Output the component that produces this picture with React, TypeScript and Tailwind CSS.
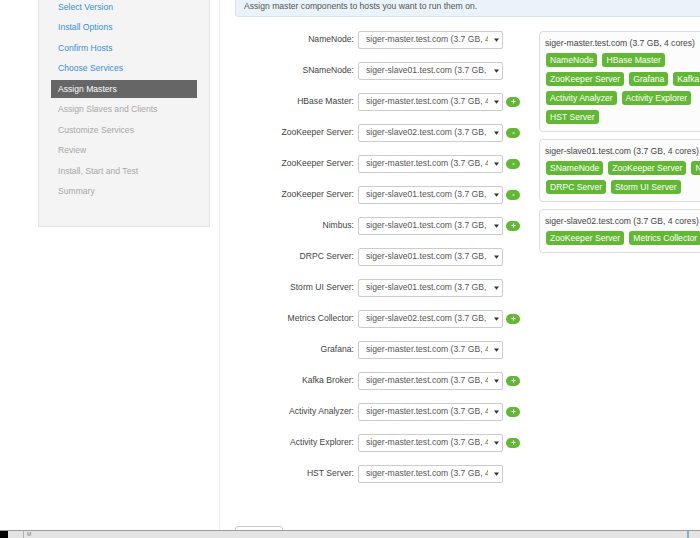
import React from 'react';

type Row = { label: string; host: string; action?: 'add' | 'remove' };

const MASTER = 'siger-master.test.com (3.7 GB, 4 cores)';
const SLAVE1 = 'siger-slave01.test.com (3.7 GB, 4 cores)';
const SLAVE2 = 'siger-slave02.test.com (3.7 GB, 4 cores)';

const steps = [
  { name: 'Select Version', state: 'done' },
  { name: 'Install Options', state: 'done' },
  { name: 'Confirm Hosts', state: 'done' },
  { name: 'Choose Services', state: 'done' },
  { name: 'Assign Masters', state: 'active' },
  { name: 'Assign Slaves and Clients', state: 'todo' },
  { name: 'Customize Services', state: 'todo' },
  { name: 'Review', state: 'todo' },
  { name: 'Install, Start and Test', state: 'todo' },
  { name: 'Summary', state: 'todo' },
];

const rows: Row[] = [
  { label: 'NameNode', host: MASTER },
  { label: 'SNameNode', host: SLAVE1 },
  { label: 'HBase Master', host: MASTER, action: 'add' },
  { label: 'ZooKeeper Server', host: SLAVE2, action: 'remove' },
  { label: 'ZooKeeper Server', host: MASTER, action: 'remove' },
  { label: 'ZooKeeper Server', host: SLAVE1, action: 'remove' },
  { label: 'Nimbus', host: SLAVE1, action: 'add' },
  { label: 'DRPC Server', host: SLAVE1 },
  { label: 'Storm UI Server', host: SLAVE1 },
  { label: 'Metrics Collector', host: SLAVE2, action: 'add' },
  { label: 'Grafana', host: MASTER },
  { label: 'Kafka Broker', host: MASTER, action: 'add' },
  { label: 'Activity Analyzer', host: MASTER, action: 'add' },
  { label: 'Activity Explorer', host: MASTER, action: 'add' },
  { label: 'HST Server', host: MASTER },
];

const hosts = [
  {
    name: MASTER,
    lines: [
      ['NameNode', 'HBase Master'],
      ['ZooKeeper Server', 'Grafana', 'Kafka Broker'],
      ['Activity Analyzer', 'Activity Explorer'],
      ['HST Server'],
    ],
  },
  {
    name: SLAVE1,
    lines: [
      ['SNameNode', 'ZooKeeper Server', 'Nimbus'],
      ['DRPC Server', 'Storm UI Server'],
    ],
  },
  {
    name: SLAVE2,
    lines: [['ZooKeeper Server', 'Metrics Collector']],
  },
];

const ActionButton = ({ kind }: { kind: 'add' | 'remove' }) => (
  <button className="w-[14px] h-[10px] rounded-full bg-[#62b734] flex items-center justify-center">
    <svg width="5" height="5" viewBox="0 0 5 5">
      {kind === 'add' ? (
        <path d="M2.5 0.5v4M0.5 2.5h4" stroke="#fff" strokeWidth="1.1" />
      ) : (
        <path d="M1.5 3h2" stroke="#fff" strokeWidth="1" />
      )}
    </svg>
  </button>
);

export default function App() {
  return (
    <div className="w-[700px] h-[538px] overflow-hidden bg-white flex flex-col text-[8.6px] font-['Liberation_Sans',Arial,sans-serif]">
      <div className="h-[530px] flex overflow-hidden">
        {/* wizard steps */}
        <div className="w-[220px] shrink-0 border-r border-[#ececec]">
          <div className="ml-[38px] w-[172px] -mt-[4px] bg-[#f4f4f4] border border-[#e2e2e2] border-t-0 pt-[1px] pb-[24px] px-[12px]">
            {steps.map((s) => (
              <div key={s.name} className="h-[20.5px] flex items-center">
                <div
                  className={`w-full h-[18px] flex items-center px-[7px] ${
                    s.state === 'active'
                      ? 'bg-[#666666] text-white'
                      : s.state === 'done'
                      ? 'text-[#3a8fd6]'
                      : 'text-[#a8a8a8]'
                  }`}
                >
                  {s.name}
                </div>
              </div>
            ))}
          </div>
        </div>

        {/* main */}
        <div className="flex-1 pl-[15px] min-w-0">
          <div className="-mt-[10px] h-[27px] w-[520px] bg-[#eaf3f9] border border-[#d5e6f1] rounded-[3px] flex items-end pb-[3px] pl-[8px] text-[#555]">
            Assign master components to hosts you want to run them on.
          </div>

          <div className="flex mt-[7px]">
            <div className="w-[304px] shrink-0">
              {rows.map((r, i) => (
                <div key={i} className="h-[31px] flex items-center">
                  <div className="w-[119px] text-right text-[#444] mr-[4px] whitespace-nowrap">{r.label}:</div>
                  <div className="w-[145px] h-[18px] border border-[#cccccc] rounded-[2px] bg-white flex items-center pl-[7px] pr-[3px] text-[#555]">
                    <span className="flex-1 overflow-hidden whitespace-nowrap">{r.host}</span>
                    <svg width="5" height="4" viewBox="0 0 5 4" className="ml-[6px] shrink-0">
                      <path d="M0 0.5h5L2.5 3.8z" fill="#333" />
                    </svg>
                  </div>
                  <div className="ml-[3px] w-[14px]">{r.action && <ActionButton kind={r.action} />}</div>
                </div>
              ))}
              <div className="mt-[37px] w-[48px] h-[20px] border border-[#cccccc] rounded-[3px]" />
            </div>

            <div className="mt-[7px] flex flex-col gap-[7px]">
              {hosts.map((h) => (
                <div
                  key={h.name}
                  className="w-[200px] border border-[#dddddd] rounded-[4px] bg-[#fcfcfc] pt-[5px] pb-[7px] pl-[5px]"
                >
                  <div className="h-[12px] leading-[12px] text-[#444] whitespace-nowrap">{h.name}</div>
                  <div className="mt-[4px] flex flex-col gap-[5px]">
                    {h.lines.map((line, li) => (
                      <div key={li} className="flex gap-[5px] pl-[1px]">
                        {line.map((c) => (
                          <span
                            key={c}
                            className="h-[14px] px-[4px] rounded-[3px] bg-[#62b734] text-white flex items-center whitespace-nowrap"
                          >
                            {c}
                          </span>
                        ))}
                      </div>
                    ))}
                  </div>
                </div>
              ))}
            </div>
          </div>
        </div>
      </div>

      {/* taskbar strip */}
      <div className="h-[8px] border-t border-[#9c9c9c] bg-[#e4e4e4] flex items-stretch">
        <div className="w-[8px] bg-black" />
        <div className="ml-[15px] w-[1px] bg-[#b0b0b0]" />
        <div className="ml-[3px] text-[5px] leading-[6px] text-[#777]">M</div>
        <div className="flex-1" />
        <div className="w-[2px] bg-[#7fb3c8] mr-[11px]" />
      </div>
    </div>
  );
}
